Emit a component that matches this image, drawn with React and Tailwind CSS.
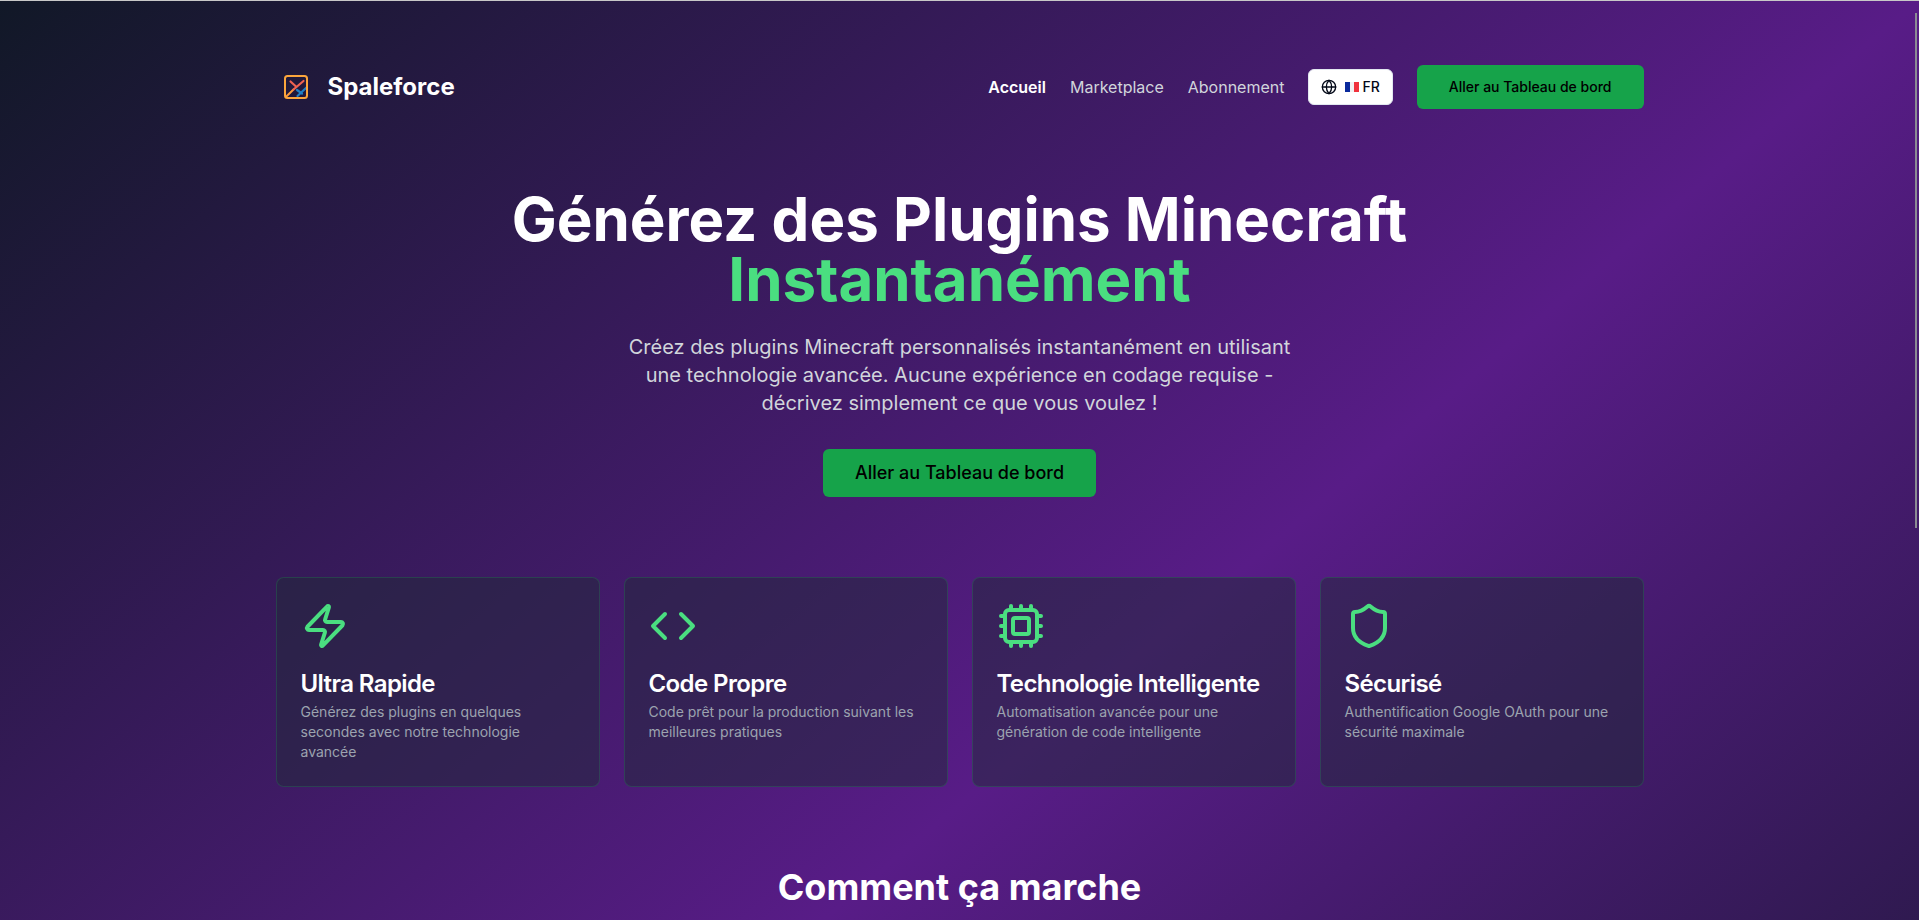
import React, { useState } from "react";
import { Globe, Zap, Code, Cpu, Shield } from "lucide-react";

const navLinks = [
  { label: "Accueil", href: "#accueil", active: true },
  { label: "Marketplace", href: "#marketplace", active: false },
  { label: "Abonnement", href: "#abonnement", active: false },
];

const features = [
  {
    icon: Zap,
    title: "Ultra Rapide",
    description: "Générez des plugins en quelques secondes avec notre technologie avancée",
  },
  {
    icon: Code,
    title: "Code Propre",
    description: "Code prêt pour la production suivant les meilleures pratiques",
  },
  {
    icon: Cpu,
    title: "Technologie Intelligente",
    description: "Automatisation avancée pour une génération de code intelligente",
  },
  {
    icon: Shield,
    title: "Sécurisé",
    description: "Authentification Google OAuth pour une sécurité maximale",
  },
];

const Logo = () => (
  <svg className="size-10" viewBox="0 0 40 40" fill="none" strokeLinecap="round" aria-hidden="true">
    <path d="M9.8 30 17.5 22.5" stroke="#fb9a3c" strokeWidth="2" />
    <path d="M14.5 14.5 20.5 20 M17.5 22.5 27.5 14" stroke="#ef6351" strokeWidth="2.2" />
    <path d="M21 23 26 26.5 M21.5 29 30.5 20.5" stroke="#1f7fc4" strokeWidth="2.2" />
    <rect x="9" y="9" width="22" height="22" rx="2.5" stroke="#fba53c" strokeWidth="2" />
  </svg>
);

const FrenchFlag = () => (
  <svg className="h-[10px] w-[14px]" viewBox="0 0 14 10" aria-hidden="true">
    <rect width="5" height="10" fill="#0a2a9c" />
    <rect x="5" width="4" height="10" fill="#f1f1f1" />
    <rect x="9" width="5" height="10" fill="#f0323c" />
  </svg>
);

const Header = () => (
  <header className="mb-20 flex items-center justify-between">
    <a href="#accueil" className="flex items-center gap-3">
      <Logo />
      <span className="text-2xl font-bold text-white">Spaleforce</span>
    </a>

    <nav className="flex items-center gap-6">
      {navLinks.map((link) => (
        <a
          key={link.label}
          href={link.href}
          className={link.active ? "font-semibold text-white" : "text-[#d1d5db] hover:text-white"}
        >
          {link.label}
        </a>
      ))}
      <button className="flex h-9 items-center gap-2 rounded-md border border-[#e2e8f0] bg-white px-3 text-sm font-medium text-[#020817]">
        <Globe size={16} />
        <span className="flex items-center gap-[3px]">
          <FrenchFlag />
          FR
        </span>
      </button>
      <button className="h-11 rounded-md bg-[#16a34a] px-8 text-sm font-medium text-black hover:bg-green-700">
        Aller au Tableau de bord
      </button>
    </nav>
  </header>
);

const Hero = () => (
  <section className="mb-20 flex flex-col items-center text-center">
    <h1 className="mb-6 text-6xl leading-none font-bold text-white">
      Générez des Plugins Minecraft
      <span className="block text-[#4ade80]">Instantanément</span>
    </h1>
    <p className="mb-8 max-w-2xl text-xl leading-7 text-[#d1d5db]">
      Créez des plugins Minecraft personnalisés instantanément en utilisant une technologie avancée.
      Aucune expérience en codage requise - décrivez simplement ce que vous voulez !
    </p>
    <button className="h-12 rounded-md bg-[#16a34a] px-8 text-lg font-medium text-black hover:bg-green-700">
      Aller au Tableau de bord
    </button>
  </section>
);

const FeatureCard = ({ icon: Icon, title, description }) => (
  <div className="flex flex-col gap-1.5 rounded-lg border border-[#22c55e]/20 bg-[#1f2937]/50 p-6">
    <Icon size={48} className="mb-4 text-[#4ade80]" />
    <h3 className="text-2xl leading-none font-semibold tracking-tight text-white">{title}</h3>
    <p className="text-sm text-[#9ca3af]">{description}</p>
  </div>
);

const App = () => {
  const [items] = useState(features);

  return (
    <div className="relative h-screen overflow-hidden border-t border-[#c8c8c8] bg-linear-to-br/srgb from-[#111827] via-[#581c87] to-[#111827] bg-[length:100%_175%] bg-no-repeat font-[Inter,sans-serif]">
      <div className="mx-auto max-w-[1400px] px-4 py-16">
        <Header />
        <Hero />
        <section className="mb-20 grid grid-cols-4 gap-6">
          {items.map((feature) => (
            <FeatureCard key={feature.title} {...feature} />
          ))}
        </section>
        <section className="text-center">
          <h2 className="text-4xl font-bold text-white">Comment ça marche</h2>
        </section>
      </div>

      {/* scroll indicator */}
      <div className="absolute top-3 right-[2px] h-[56%] w-[2px] bg-[#8b8b93]" />
    </div>
  );
};

export default App;
